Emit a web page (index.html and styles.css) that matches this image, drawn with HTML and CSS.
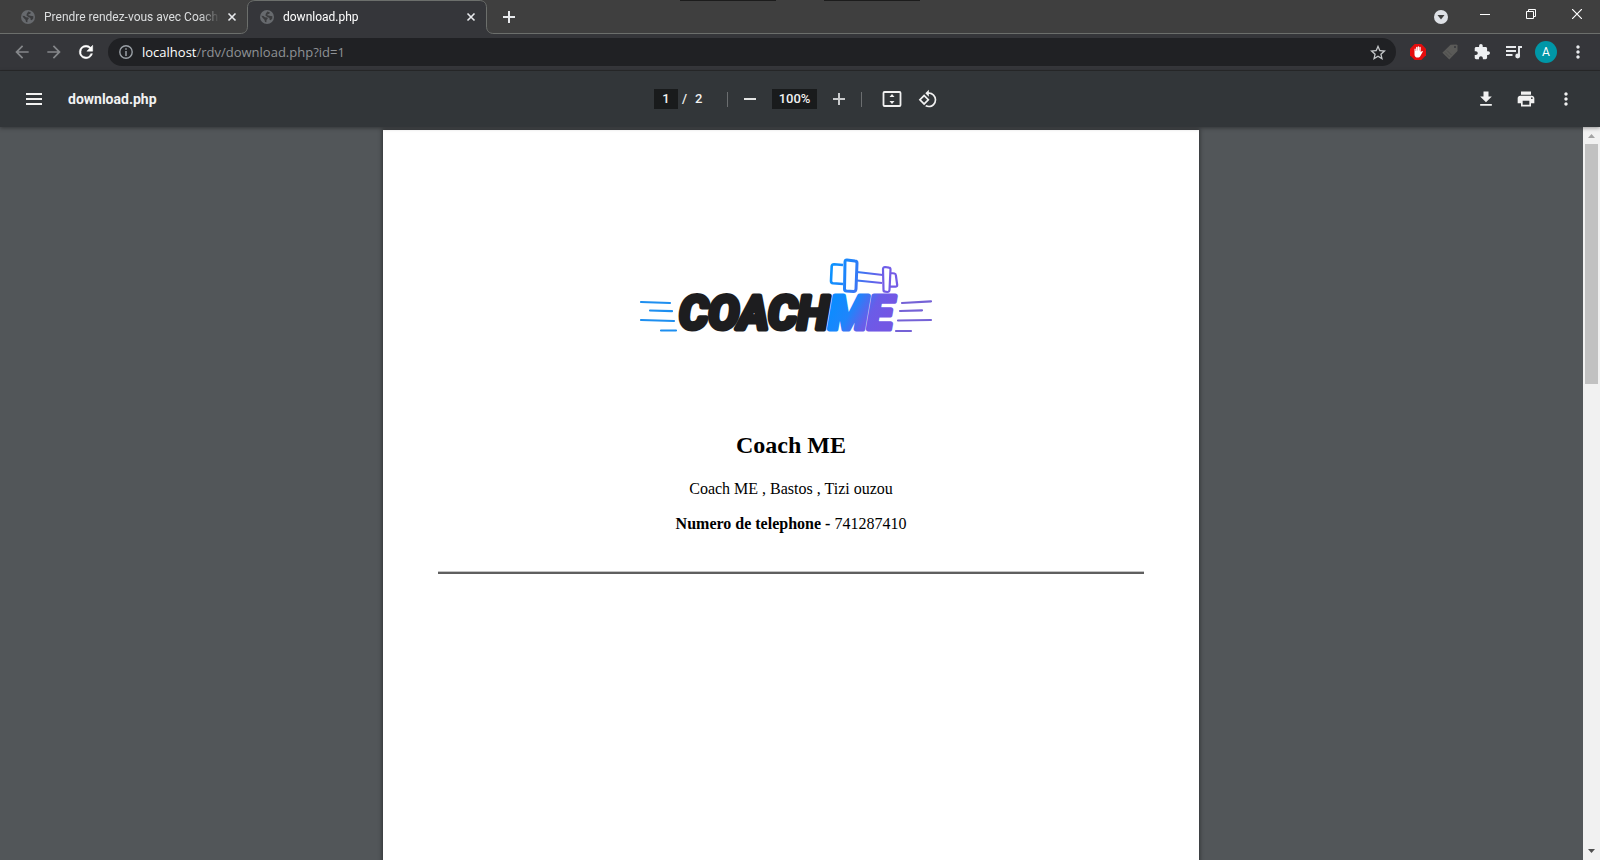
FILE: index.html
```html
<!DOCTYPE html>
<html lang="fr">
<head>
<meta charset="utf-8">
<title>download.php</title>
<link rel="stylesheet" href="styles.css">
</head>
<body>
<svg class="defs" width="0" height="0" aria-hidden="true">
  <symbol id="globe" viewBox="0 0 14 14">
    <circle cx="7" cy="7" r="7" fill="#676a6e"/>
    <path fill="#3b3c3e" d="M1.300 5.800L3.500 6l1.500 1.200 2.300.2.500 1.200-1.300 1.300-.1 2.300-1.400-.3-.5-2.200-1.800-1.600z"/>
    <path fill="#3b3c3e" d="M7.300 1.500l2.500.8-.4 1.400-1.800.6-.3 1 2.300.4 2.800.5-.2 2.600-1.600 1.400-1-.4-.2-1.900-2-.8-2-1.600.4-1.800z"/>
  </symbol>
  <symbol id="cross" viewBox="0 0 10 10"><path d="M1.500 1.500l7 7M8.500 1.500l-7 7" stroke="currentColor" stroke-width="1.600"/></symbol>
  <symbol id="dots" viewBox="0 0 24 24"><path fill="currentColor" d="M12 8c1.100 0 2-.9 2-2s-.9-2-2-2-2 .9-2 2 .9 2 2 2zm0 2c-1.100 0-2 .9-2 2s.9 2 2 2 2-.9 2-2-.9-2-2-2zm0 6c-1.100 0-2 .9-2 2s.9 2 2 2 2-.9 2-2-.9-2-2-2z"/></symbol>
</svg>

<header class="tabstrip">
  <div class="marks" aria-hidden="true"><i></i><i></i></div>
  <div class="tab">
    <svg class="favicon"><use href="#globe"/></svg>
    <span class="tab-title">Prendre rendez-vous avec CoachM</span>
    <button class="tab-close" aria-label="Fermer"><svg><use href="#cross"/></svg></button>
  </div>
  <svg class="edge" viewBox="0 0 16 34" aria-hidden="true">
    <path fill="#35363a" d="M0 34v-.5C5 33.500 7.500 31 7.500 26V8C7.500 3 10 .5 16 .5V34z"/>
    <path fill="none" stroke="#6c6f6c" d="M0 33.500C5 33.500 7.500 31 7.500 26V8C7.500 3 10 .5 16 .5"/>
  </svg>
  <div class="tab active">
    <svg class="favicon"><use href="#globe"/></svg>
    <span class="tab-title">download.php</span>
    <button class="tab-close" aria-label="Fermer"><svg><use href="#cross"/></svg></button>
  </div>
  <svg class="edge" viewBox="0 0 16 34" aria-hidden="true">
    <path fill="#35363a" d="M15 34v-.5C10 33.500 7.500 31 7.500 26V8C7.500 3 5 .5 0 .5V34z"/>
    <path fill="none" stroke="#6c6f6c" d="M16 33.500h-1C10 33.500 7.500 31 7.500 26V8C7.500 3 5 .5 0 .5"/>
  </svg>
  <div class="strip-rest">
    <button class="new-tab" aria-label="Nouvel onglet"><svg width="12" height="12"><path d="M6 0v12M0 6h12" stroke="#e8eaed" stroke-width="2"/></svg></button>
    <button class="tab-search" aria-label="Rechercher des onglets"><svg width="14" height="14"><circle cx="7" cy="7" r="7" fill="#dee1e6"/><path d="M3.500 5h7L7 9.500z" fill="#3f3f3f"/></svg></button>
    <button class="win" aria-label="Réduire"><svg width="10" height="10"><path d="M0 5.500h10" stroke="#fff"/></svg></button>
    <button class="win" aria-label="Restaurer"><svg width="10" height="10" fill="none" stroke="#fff"><path d="M.5 2.500h7v7h-7zM2.500 2.500v-2h7v7h-2"/></svg></button>
    <button class="win" aria-label="Fermer la fenêtre"><svg width="10" height="10"><path d="M0 0l10 10M10 0L0 10" stroke="#fff" stroke-width="1.200"/></svg></button>
  </div>
</header>

<nav class="toolbar">
  <button class="tool dim" aria-label="Retour"><svg width="20" height="20" viewBox="0 0 24 24"><path fill="currentColor" d="M20 11H7.830l5.590-5.590L12 4l-8 8 8 8 1.410-1.410L7.830 13H20z"/></svg></button>
  <button class="tool dim" aria-label="Avancer"><svg width="20" height="20" viewBox="0 0 24 24"><path fill="currentColor" d="M4 13h12.170l-5.590 5.590L12 20l8-8-8-8-1.410 1.410L16.170 11H4z"/></svg></button>
  <button class="tool" aria-label="Actualiser"><svg width="20" height="20" viewBox="0 0 24 24"><path fill="#fff" stroke="#fff" stroke-width=".6" d="M17.650 6.350A7.958 7.958 0 0 0 12 4a8 8 0 1 0 7.730 10h-2.080A6 6 0 1 1 12 6c1.660 0 3.140.69 4.220 1.780L13 11h7V4z"/></svg></button>
  <div class="omnibox">
    <svg width="14" height="14" fill="none" stroke="#9aa0a6"><circle cx="7" cy="7" r="6.200" stroke-width="1.400"/><path d="M7 6v5M7 3.200v1.500" stroke-width="1.500"/></svg>
    <a class="url" href="#"><b>localhost</b>/rdv/download.php?id=1</a>
    <button class="star" aria-label="Favori"><svg width="16" height="16" viewBox="2 1 20 20"><path fill="#c4c7c9" d="M22 9.240l-7.190-.62L12 2 9.190 8.630 2 9.240l5.460 4.730L5.820 21 12 17.270 18.180 21l-1.630-7.030zM12 15.400l-3.760 2.270 1-4.280-3.320-2.880 4.380-.38L12 6.100l1.710 4.040 4.380.38-3.320 2.880 1 4.280z"/></svg></button>
  </div>
  <button class="tool" aria-label="AdBlock"><svg width="16" height="16"><path fill="#e40d0d" d="M4.700 0h6.600L16 4.700v6.600L11.300 16H4.700L0 11.300V4.700z"/><path fill="#fff" d="M4.500 5.200c0-.9 1.200-.9 1.200 0V7h.4V3.600c0-1 1.300-1 1.300 0v3h.3V2.900c0-1 1.400-1 1.400 0v3.700h.3v-3c0-1 1.300-1 1.300 0v4.700l1-1.100c.7-.6 1.400.1.900.8l-2.200 3.900c-.6 1.200-1.500 1.700-2.700 1.700-2 0-3.200-1.200-3.200-3.100z"/></svg></button>
  <button class="tool" aria-label="Étiquette"><svg width="16" height="16"><path fill="#5a5a58" d="M8.500.8L14.500.5l1 1v5.500L7.300 15.500.4 8.700z"/><circle cx="13" cy="3" r="1" fill="#35363a"/><path d="M3 8.500l4.500 4.500M5 6.500l4.500 4.500" stroke="#4c4c4b"/></svg></button>
  <button class="tool" aria-label="Extensions"><svg width="16" height="16" viewBox="1 1 22 22"><path fill="#eef0f2" d="M20.500 11H19V7c0-1.100-.9-2-2-2h-4V3.500a2.500 2.500 0 0 0-5 0V5H4c-1.100 0-1.990.9-1.990 2v3.800H3.500c1.490 0 2.700 1.210 2.700 2.700s-1.210 2.700-2.700 2.700H2V20c0 1.100.9 2 2 2h3.800v-1.500c0-1.490 1.210-2.700 2.700-2.700s2.700 1.210 2.700 2.700V22H17c1.100 0 2-.9 2-2v-4h1.500a2.500 2.500 0 0 0 0-5z"/></svg></button>
  <button class="tool" aria-label="Multimédia"><svg width="16" height="14" fill="none" stroke="#e8eaed" stroke-width="1.900"><path d="M0 2h10M0 6h10M0 10h6.500M13 11V2h3"/><circle cx="11.700" cy="11" r="1.500" fill="#e8eaed"/></svg></button>
  <button class="tool" aria-label="Profil"><span class="avatar">A</span></button>
  <button class="tool" aria-label="Menu"><svg width="20" height="20"><use href="#dots"/></svg></button>
</nav>

<section class="pdfbar">
  <div class="side">
    <button class="pdf-btn" aria-label="Plan"><svg width="16" height="12"><path d="M0 1h16M0 6h16M0 11h16" stroke="#f1f1f1" stroke-width="2"/></svg></button>
    <span class="doc-title">download.php</span>
  </div>
  <div class="center">
    <input class="field page-no" aria-label="Page" value="1"><span class="count"><span>/</span><span>2</span></span>
    <i class="sep"></i>
    <button class="step" aria-label="Zoom arrière"><svg width="12" height="12"><path d="M0 6h12" stroke="#e4e5e5" stroke-width="2"/></svg></button>
    <input class="field zoom" aria-label="Zoom" value="100%">
    <button class="step" aria-label="Zoom avant"><svg width="12" height="12"><path d="M0 6h12M6 0v12" stroke="#c9cbcc" stroke-width="2"/></svg></button>
    <i class="sep"></i>
    <div class="view">
      <button aria-label="Ajuster à la page"><svg width="20" height="16"><rect x="1.500" y="1" width="17" height="14" rx="1" fill="none" stroke="#f1f1f1" stroke-width="1.800"/><path fill="#f1f1f1" d="M10 3l2.500 3h-5zM10 13l-2.500-3h5z"/></svg></button>
      <button aria-label="Pivoter"><svg width="20" height="20" viewBox="0 0 24 24"><path fill="#f1f1f1" d="M7.340 6.410L.86 12.900l6.490 6.480 6.490-6.480zM3.690 12.900l3.660-3.660L11 12.900l-3.660 3.660zm15.670-6.260A8.950 8.950 0 0 0 13 4V.76L8.760 5 13 9.240V6c1.790 0 3.580.68 4.950 2.050a7.007 7.007 0 0 1 0 9.900 6.973 6.973 0 0 1-7.920 1.370l-1.490 1.490C9.930 21.600 11.470 22 13 22c2.300 0 4.610-.88 6.360-2.640a8.980 8.980 0 0 0 0-12.720z"/></svg></button>
    </div>
  </div>
  <div class="side end">
    <button class="pdf-btn" aria-label="Télécharger"><svg width="20" height="20" viewBox="0 0 24 24"><path fill="#f1f1f1" d="M19 9h-4V3H9v6H5l7 7zM5 18v2h14v-2z"/></svg></button>
    <button class="pdf-btn" aria-label="Imprimer"><svg width="20" height="20" viewBox="0 0 24 24"><path fill="#f1f1f1" d="M19 8H5c-1.660 0-3 1.340-3 3v6h4v4h12v-4h4v-6c0-1.660-1.340-3-3-3zm-3 11H8v-5h8zm3-7a1 1 0 1 1 0-2 1 1 0 0 1 0 2zM18 3H6v4h12z"/></svg></button>
    <button class="pdf-btn" aria-label="Autres actions"><svg width="20" height="20"><use href="#dots"/></svg></button>
  </div>
</section>

<main class="viewer">
  <div class="canvas">
    <article class="page">
      <svg class="logo" viewBox="0 0 342 110" role="img" aria-label="Coach ME">
        <defs>
          <linearGradient id="me" gradientUnits="userSpaceOnUse" x1="215" y1="60" x2="262" y2="86"><stop offset="0" stop-color="#0c8cff"/><stop offset=".35" stop-color="#1f85fb"/><stop offset=".7" stop-color="#6a5ce8"/><stop offset="1" stop-color="#7357e4"/></linearGradient>
          <linearGradient id="bell" gradientUnits="userSpaceOnUse" x1="210" y1="30" x2="262" y2="46"><stop offset="0" stop-color="#0a93ff"/><stop offset=".35" stop-color="#2282fa"/><stop offset="1" stop-color="#735be6"/></linearGradient>
        </defs>
        <g fill="none" stroke-linecap="round" stroke-width="2.200">
          <path stroke="#1e8ff0" d="M21 62l29 1M30 70.500l22 .6M21 80l33 1M41 90.500h15"/>
          <path stroke="#7562d6" d="M282 63l29-1.600M280 71l22-.6M278 80.500l33-.5M276 91h15"/>
        </g>
        <g fill="none" stroke="url(#bell)" stroke-linejoin="round">
          <path stroke-width="2.600" d="M223 25l-9-.8q-2 0-2.300 2L211 41q0 2 2 2.300l10 .7"/>
          <path stroke-width="3" d="M227 20l8 1q2 .2 2 2l-1 26q-.2 2.500-2.500 2.500l-7-.5q-2-.2-2-2l.5-27q0-2.200 2-2z"/>
          <path stroke-width="2" d="M237 32l26 3M237 40.500l25 2.500"/>
          <path stroke-width="2.200" d="M265 27l4 .6q1.600.2 1.500 2L269.500 50q-.2 2-2 2l-2.500-.3q-1.600-.2-1.500-2l-.5-20.700q.2-2 2-2zM271 33l3.500.5q1.300.3 1.400 2l1.300 9.500q0 1.700-1.700 1.700l-5.500-.4"/>
        </g>
        <text x="59" y="89" class="wordmark"><tspan class="coach">COACH</tspan><tspan class="me">ME</tspan></text>
      </svg>
      <h1>Coach ME</h1>
      <p>Coach ME , Bastos , Tizi ouzou</p>
      <p><b>Numero de telephone -</b> 741287410</p>
      <hr>
    </article>
  </div>
  <div class="scrollbar" aria-hidden="true">
    <svg width="17" height="17"><path d="M5 11h7L8.500 7z" fill="#a3a3a3"/></svg>
    <div class="thumb"></div>
    <svg width="17" height="17"><path d="M5 6h7L8.500 10z" fill="#505050"/></svg>
  </div>
</main>
</body>
</html>
```
FILE: styles.css
```css
* { box-sizing: border-box; }
body {
  margin: 0;
  height: 100vh;
  display: flex;
  flex-direction: column;
  overflow: hidden;
  background: #525659;
  font-family: Roboto, "Open Sans", sans-serif;
}
button {
  margin: 0;
  padding: 0;
  border: 0;
  background: none;
  color: #e8eaed;
  display: flex;
  align-items: center;
  justify-content: center;
}
svg { display: block; flex: none; }
.defs { position: absolute; }

.tabstrip {
  position: relative;
  display: flex;
  height: 34px;
  flex: none;
  background: #3f3f3f;
}
.marks {
  position: absolute;
  top: 0;
  left: 680px;
  display: flex;
  gap: 48px;
}
.marks i { width: 96px; height: 1px; background: #1c1c1c; }
.tab {
  width: 240px;
  display: flex;
  align-items: center;
  padding: 0 0 0 21px;
  border-bottom: 1px solid #6c6f6c;
  color: #dcdedf;
  font-size: 12px;
}
.tab.active {
  width: 223px;
  padding: 0 0 1px 4px;
  border-bottom: 0;
  border-top: 1px solid #6c6f6c;
  background: #35363a;
  color: #fff;
}
.favicon { width: 14px; height: 14px; margin-right: 9px; }
.tab-title {
  flex: 1;
  overflow: hidden;
  white-space: nowrap;
  -webkit-mask-image: linear-gradient(90deg, #000 156px, transparent 176px);
  mask-image: linear-gradient(90deg, #000 156px, transparent 176px);
}
.tab-close { width: 16px; height: 16px; }
.tab-close svg { width: 10px; height: 10px; }
.edge { width: 16px; height: 34px; }
.strip-rest {
  flex: 1;
  display: flex;
  border-bottom: 1px solid #6c6f6c;
}
.new-tab { width: 28px; margin-right: auto; }
.tab-search { width: 28px; margin-right: 7px; }
.win { width: 46px; height: 28px; }

.toolbar {
  display: flex;
  align-items: center;
  height: 37px;
  flex: none;
  padding: 0 6px;
  background: #35363a;
  border-bottom: 1px solid #292a2c;
}
.tool { width: 32px; height: 28px; }
.dim { color: #85878a; }
.omnibox {
  flex: 1;
  height: 28px;
  margin: 0 6px;
  padding: 0 10px 0 11px;
  border-radius: 14px;
  background: #202124;
  display: flex;
  align-items: center;
}
.url {
  flex: 1;
  margin-left: 9px;
  color: #8f9296;
  font-family: "Open Sans", sans-serif;
  font-size: 13px;
  text-decoration: none;
}
.url b { font-weight: 400; color: #fff; }
.avatar {
  width: 22px;
  height: 22px;
  border-radius: 50%;
  background: #0097a7;
  color: #fff;
  font: 12px/22px Roboto, sans-serif;
}

.pdfbar {
  position: relative;
  z-index: 1;
  display: grid;
  grid-template-columns: 1fr auto 1fr;
  align-items: center;
  height: 56px;
  flex: none;
  padding: 0 14px;
  background: #323639;
  box-shadow: 0 1px 4px rgba(0, 0, 0, .4);
  color: #f1f1f1;
  font: 500 14px/20px Roboto, sans-serif;
}
.side { display: flex; align-items: center; }
.end { justify-content: flex-end; }
.pdf-btn { width: 40px; height: 40px; color: #f1f1f1; }
.doc-title { margin-left: 14px; font-weight: 700; }
.center { display: flex; align-items: center; gap: 6px; }
.field {
  height: 20px;
  padding: 0;
  border: 0;
  background: #191b1c;
  color: #f1f1f1;
  font: 500 13px/20px Roboto, sans-serif;
  text-align: center;
}
.page-no { width: 24px; }
.zoom { width: 45px; }
.count { display: flex; gap: 8px; width: 37px; margin-left: -2px; font-size: 13px; }
.count + .sep { margin-left: 2px; }
.sep { width: 1px; height: 15px; background: #6b6e70; }
.step { width: 32px; height: 32px; }
.view { display: flex; margin-left: 6px; }
.view button { width: 36px; height: 36px; }

.viewer { flex: 1; min-height: 0; display: flex; }
.canvas {
  flex: 1;
  overflow: hidden;
  display: flex;
  justify-content: center;
  align-items: flex-start;
  padding: 3px 1px 0 0;
}
.page {
  width: 816px;
  min-height: 1056px;
  padding: 110px 55px;
  background: #fff;
  box-shadow: 0 0 4px 1px rgba(0, 0, 0, .4);
  color: #000;
  font: 16px/18px "Liberation Serif", "Times New Roman", serif;
  text-align: center;
}
.logo { width: 342px; height: 110px; margin: 0 auto 81px; }
.wordmark {
  font: italic 700 46px Roboto, sans-serif;
  stroke-width: 5;
  stroke-linejoin: round;
}
.coach { fill: #1d1d1f; stroke: #1d1d1f; }
.me { fill: url(#me); stroke: url(#me); }
h1 { margin: 0 0 21px; font-size: 24px; line-height: 28px; }
p { margin: 0 0 17px; }
hr {
  margin: 38px 0 0;
  border: 0;
  height: 3px;
  background: #5f5f5f;
  border-top: 1px solid #c4c4c4;
}
.scrollbar {
  width: 17px;
  background: #f1f1f1;
  display: flex;
  flex-direction: column;
  align-items: center;
}
.thumb { width: 13px; height: 240px; background: #c1c1c1; margin-bottom: auto; }
```
